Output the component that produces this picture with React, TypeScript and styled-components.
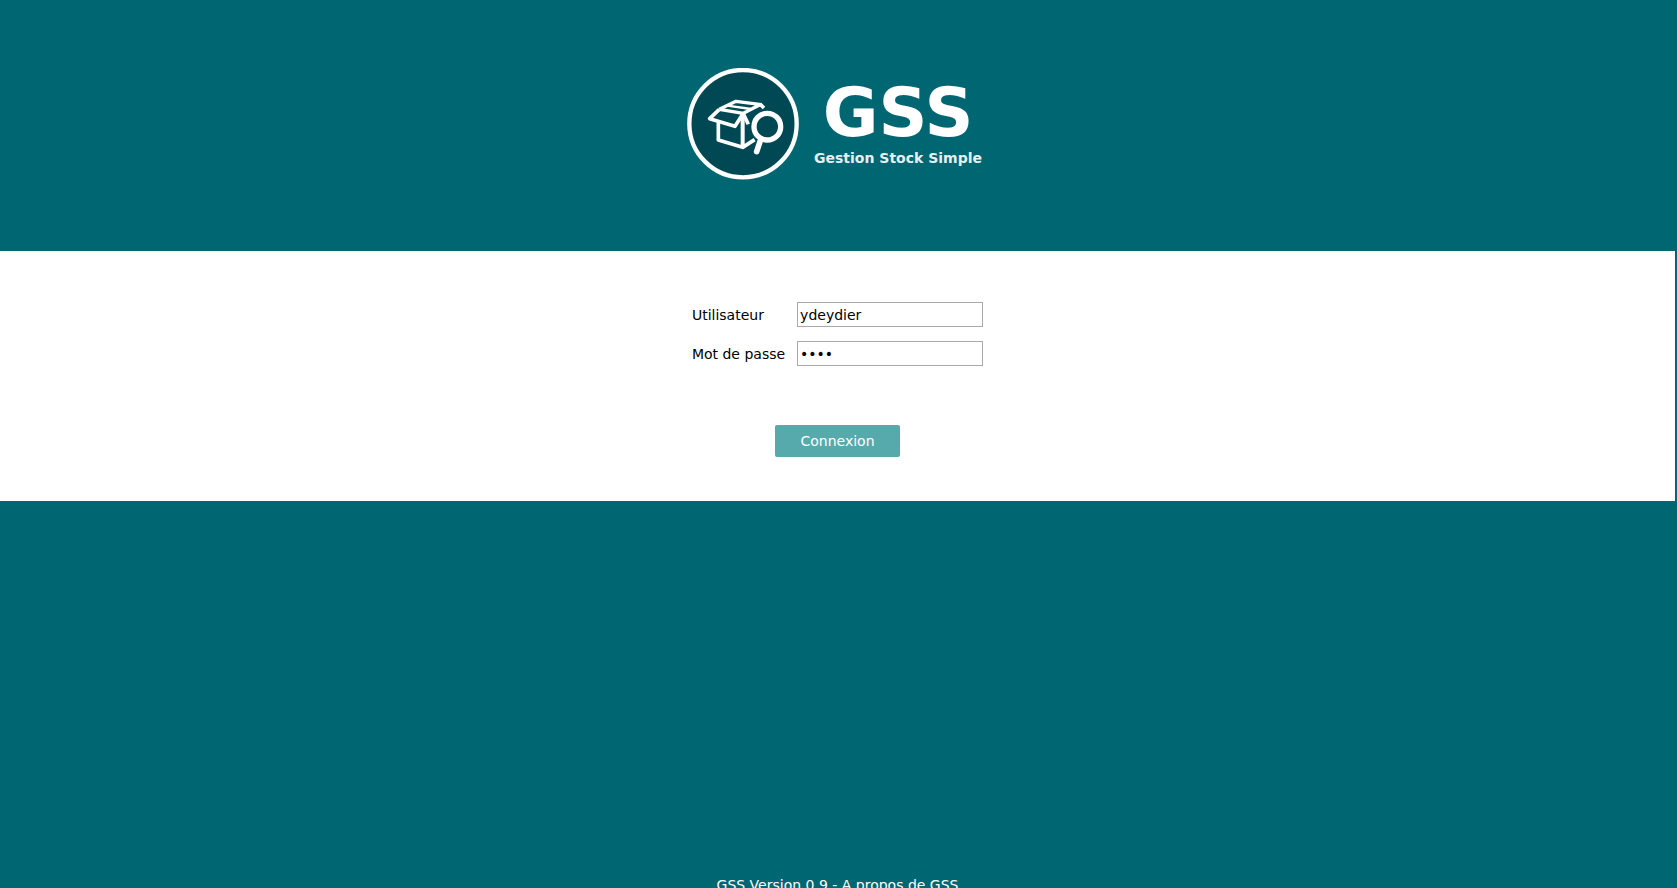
import React from "react";
import styled, { createGlobalStyle } from "styled-components";

const GlobalStyle = createGlobalStyle`
  *, *::before, *::after { box-sizing: border-box; }
  body {
    margin: 0;
    background: #006672;
    color: #000;
    font: 14px/18px Verdana, "DejaVu Sans", sans-serif;
  }
`;

const Page = styled.div`
  display: flex;
  flex-direction: column;
  height: 100vh;
  padding-right: 2px;
  overflow: hidden;
`;

const Header = styled.header`
  display: flex;
  justify-content: center;
  flex: none;
  gap: 15px;
  height: 251px;
  padding: 68px 6px 0 0;
  color: #fff;
`;

const Emblem = styled.svg`
  width: 112px;
  height: 112px;
`;

const Brand = styled.div`
  display: flex;
  flex-direction: column;
  align-items: center;
  padding-top: 9px;
  font-weight: bold;
`;

const Title = styled.h1`
  margin: 0;
  font-size: 68px;
  line-height: 72px;
`;

const Tagline = styled.p`
  margin: 0;
  font-size: 14px;
  line-height: 18px;
  color: #e6f0f1;
`;

const LoginForm = styled.form`
  display: flex;
  flex: none;
  flex-direction: column;
  align-items: center;
  height: 250px;
  padding-top: 51px;
  background: #fff;
`;

const Fields = styled.div`
  display: grid;
  grid-template-columns: auto 186px;
  align-items: center;
  gap: 14px 12px;
`;

const Input = styled.input`
  height: 25px;
  padding: 0 2px;
  border: 1px solid #a9a9a9;
  border-radius: 0;
  background: #fff;
  color: #000;
  font: inherit;
  outline: none;
`;

const Submit = styled.button`
  width: 125px;
  height: 32px;
  margin-top: 59px;
  padding: 0;
  border: 0;
  border-radius: 2px;
  background: #56aaab;
  color: #fff;
  font: inherit;
  cursor: pointer;
`;

const Footer = styled.footer`
  flex: none;
  margin-top: 375px;
  color: #fff;
  text-align: center;
`;

const FooterLink = styled.a`
  color: inherit;
  text-decoration: none;
`;

function BoxEmblem() {
  return (
    <Emblem viewBox="21 23 336 336" aria-hidden="true" fill="none" stroke="#fff">
      <circle cx="189" cy="190" r="161" fill="#004954" strokeWidth="13" />
      <g strokeWidth="11" strokeLinejoin="round">
        <path d="M118 147 168 123 244 133M118 147 190 159 240 133" strokeWidth="10" />
        <path d="M118 147 89 175 165 198 190 159" />
        <path d="M142 136 213 146" strokeWidth="7" />
        <path d="M115 186V239L188 261 224 238" />
        <path d="M188 160V261" strokeWidth="12" />
        <path d="M190 160 205 192M240 131 252 143" />
      </g>
      <circle cx="262" cy="199" r="40" fill="#004954" strokeWidth="16" />
      <path d="M242 238 230 274" strokeWidth="17" strokeLinecap="round" />
    </Emblem>
  );
}

export default function App() {
  return (
    <>
      <GlobalStyle />
      <Page>
        <Header>
          <BoxEmblem />
          <Brand>
            <Title>GSS</Title>
            <Tagline>Gestion Stock Simple</Tagline>
          </Brand>
        </Header>
        <LoginForm onSubmit={(event: React.FormEvent) => event.preventDefault()}>
          <Fields>
            <label htmlFor="user">Utilisateur</label>
            <Input id="user" type="text" defaultValue="ydeydier" />
            <label htmlFor="password">Mot de passe</label>
            <Input id="password" type="password" defaultValue="gss1" />
          </Fields>
          <Submit type="submit">Connexion</Submit>
        </LoginForm>
        <Footer>
          GSS Version 0.9 - <FooterLink href="#about">A propos de GSS</FooterLink>
        </Footer>
      </Page>
    </>
  );
}
